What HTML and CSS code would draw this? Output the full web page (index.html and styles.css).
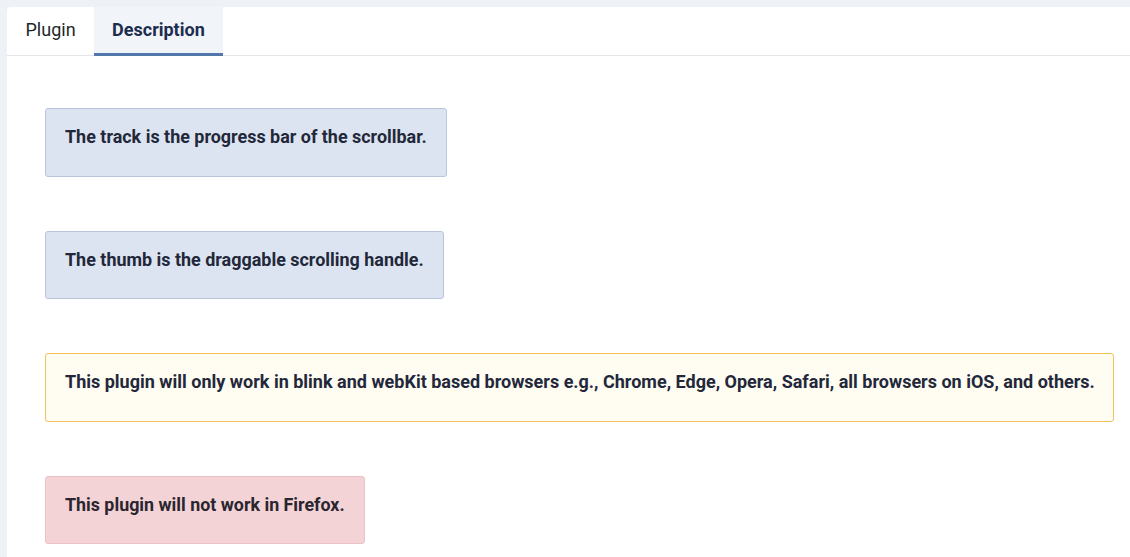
FILE: index.html
```html
<!DOCTYPE html>
<html lang="en">
<head>
<meta charset="utf-8">
<title>Plugin Description</title>
<link rel="stylesheet" href="styles.css">
</head>
<body>
<div class="panel">
  <div class="tabs">
    <div class="tab">Plugin</div>
    <div class="tab active">Description</div>
  </div>
  <div class="content">
    <div class="alert info">The track is the progress bar of the scrollbar.</div>
    <div class="alert info">The thumb is the draggable scrolling handle.</div>
    <div class="alert warning">This plugin will only work in blink and webKit based browsers e.g., Chrome, Edge, Opera, Safari, all browsers on iOS, and others.</div>
    <div class="alert danger">This plugin will not work in Firefox.</div>
  </div>
</div>
</body>
</html>
```

FILE: styles.css
```css
html, body {
  margin: 0;
  padding: 0;
  background: #eef2f7;
  font-family: Roboto, "Noto Sans", sans-serif;
  color: #22262a;
}
body {
  padding: 7px 0 0 7px;
  height: 557px;
  box-sizing: border-box;
  overflow: hidden;
}
.panel {
  background: #fff;
  border-top-left-radius: 4px;
  height: 100%;
}
.tabs {
  display: flex;
  border-bottom: 1px solid #e3e7ec;
  height: 49px;
  box-sizing: border-box;
}
.tab {
  padding: 0 18.5px;
  font-size: 18px;
  line-height: 46px;
  color: #22262a;
}
.tab.active {
  background: #f1f4f8;
  font-weight: 700;
  color: #1c2d4f;
  border-bottom: 3px solid #5277ad;
  height: 49px;
  padding: 0 18px;
  box-sizing: border-box;
}
.content {
  padding: 52px 16px 0 38px;
  display: flex;
  flex-direction: column;
  align-items: flex-start;
  gap: 54px;
}
.alert {
  border: 1px solid;
  border-radius: 3px;
  padding: 15px 19px 25.5px;
  font-size: 17.85px;
  font-weight: 700;
  line-height: 26px;
  color: #22283a;
  white-space: nowrap;
}
.info {
  background: #dde4f1;
  border-color: #bac5db;
  font-size: 17.95px;
}
.warning {
  background: #fffcf2;
  border-color: #f0c15a;
  align-self: stretch;
  font-size: 18px;
  padding-right: 17px;
}
.danger {
  background: #f3d3d5;
  border-color: #ebc2c5;
  color: #2a2530;
}
```
